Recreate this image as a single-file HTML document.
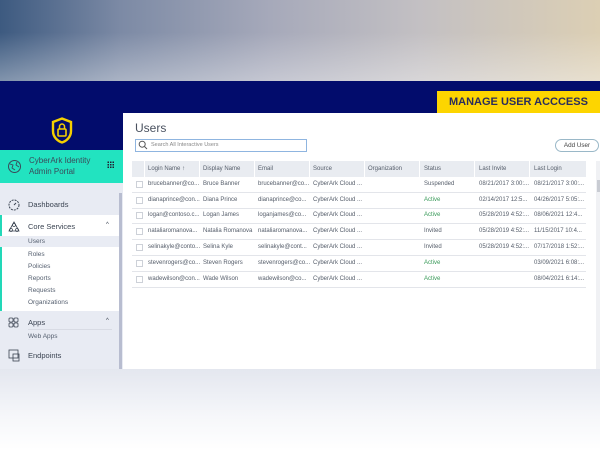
<!DOCTYPE html>
<html><head><meta charset="utf-8"><style>
*{margin:0;padding:0;box-sizing:border-box}
body{width:600px;height:450px;overflow:hidden;position:relative;font-family:"Liberation Sans",sans-serif;background:#fff}
.top{position:absolute;left:0;top:0;width:600px;height:81px;background:linear-gradient(90deg,#3d5a80 0%,#7c8aa5 20%,#a6a9ba 45%,#c3c0c3 70%,#dccfb4 100%)}
.top:after{content:"";position:absolute;inset:0;background:linear-gradient(180deg,rgba(255,255,255,0) 40%,rgba(255,255,255,.35) 100%)}
.navy{position:absolute;left:0;top:81px;width:600px;height:289px;background:#020c6c}
.banner{position:absolute;left:437px;top:91px;width:163px;height:22px;background:#fdd500;color:#2a2d5c;font-weight:bold;font-size:11px;line-height:22px;padding-left:12px;letter-spacing:0}
.bottom{position:absolute;left:0;top:369px;width:600px;height:81px;background:linear-gradient(180deg,#e4e7ef,#f6f7fa 60%,#fff)}
.side{position:absolute;left:0;top:183px;width:123px;height:186px;background:#e8ebf3}
.tealh{position:absolute;left:0;top:150px;width:123px;height:33px;background:#22e3c0;font-size:8px;color:#3a4a5a;line-height:11px}
.sb{position:absolute;left:119px;top:193px;width:3px;height:176px;background:#b8bdd0}
.item{position:absolute;font-size:7.5px;color:#3b4452}
.sub{position:absolute;left:28px;font-size:6.5px;color:#566070}
.main{position:absolute;left:123px;top:113px;width:477px;height:256px;background:#fff}
.t{position:absolute;font-size:6px;color:#555d6a;white-space:nowrap}
.hdr{position:absolute;left:132px;top:161px;width:454px;height:16px;background:#e9ecf1}
.row{position:absolute;left:132px;width:454px;height:1px;background:#e3e5ea}
.cb{position:absolute;left:136px;width:7px;height:7px;border:1px solid #cdd1d8;background:#fff}
</style></head><body>
<div class="top"></div>
<div class="navy"></div>
<div class="banner">MANAGE USER ACCCESS</div>
<svg style="position:absolute;left:51px;top:117px" width="22" height="27" viewBox="0 0 22 27"><path d="M11 1.5 L20 5 V14 C20 20 15.5 24 11 25.5 C6.5 24 2 20 2 14 V5 Z" fill="none" stroke="#f5cf00" stroke-width="2.4"/><rect x="7" y="12" width="8" height="7" rx="1" fill="none" stroke="#f5cf00" stroke-width="1.6"/><path d="M8.5 12 V9.5 a2.5 2.5 0 0 1 5 0 V12" fill="none" stroke="#f5cf00" stroke-width="1.5"/></svg>
<div class="side"></div>
<div class="tealh"><svg style="position:absolute;left:7px;top:9px" width="15" height="15" viewBox="0 0 15 15"><circle cx="7.5" cy="7.5" r="6" fill="none" stroke="#3a4a5a" stroke-width="1"/><path d="M3 5 L6 6 L5 9 L8 11 M10 3 L9 6 L12 8" fill="none" stroke="#3a4a5a" stroke-width=".9"/></svg><div style="position:absolute;left:29px;top:5px">CyberArk Identity<br>Admin Portal</div><div style="position:absolute;left:107px;top:11px;width:7px;height:7px;background-image:radial-gradient(circle,#223 0.8px,transparent 1px);background-size:2.5px 2.5px"></div></div>
<div style="position:absolute;left:0;top:215px;width:119px;height:96px;background:#fff"></div>
<div style="position:absolute;left:0;top:215px;width:2px;height:96px;background:#22d8b8"></div>
<div style="position:absolute;left:0;top:236px;width:119px;height:11px;background:#e9ecf4"></div>
<div style="position:absolute;top:329px;height:1px;background:#d8dbe4;left:28px;width:84px"></div>
<svg style="position:absolute;left:8px;top:199px" width="12" height="12" viewBox="0 0 12 12"><circle cx="6" cy="6" r="5" fill="none" stroke="#3b4452" stroke-dasharray="2 1"/><path d="M6 6 L8 4" stroke="#3b4452"/></svg>
<div class="item" style="left:28px;top:200px">Dashboards</div>
<svg style="position:absolute;left:8px;top:221px" width="12" height="12" viewBox="0 0 12 12"><path d="M6 1 L11 10 H1 Z" fill="none" stroke="#3b4452" stroke-width=".8"/><circle cx="6" cy="4" r="1.5" fill="none" stroke="#3b4452" stroke-width=".7"/><circle cx="3" cy="9" r="1.5" fill="none" stroke="#3b4452" stroke-width=".7"/><circle cx="9" cy="9" r="1.5" fill="none" stroke="#3b4452" stroke-width=".7"/></svg>
<div class="item" style="left:28px;top:222px">Core Services</div>
<div class="item" style="left:106px;top:222px;font-size:6px">^</div>
<div class="sub" style="top:238px">Users</div>
<div class="sub" style="top:251px">Roles</div>
<div class="sub" style="top:263px">Policies</div>
<div class="sub" style="top:275px">Reports</div>
<div class="sub" style="top:287px">Requests</div>
<div class="sub" style="top:299px">Organizations</div>
<svg style="position:absolute;left:8px;top:317px" width="11" height="11" viewBox="0 0 11 11" fill="none" stroke="#3b4452" stroke-width=".8"><rect x="1" y="1" width="4" height="4" rx="1"/><rect x="6" y="1" width="4" height="4" rx="1"/><rect x="1" y="6" width="4" height="4" rx="1"/><rect x="6" y="6" width="4" height="4" rx="1"/></svg>
<div class="item" style="left:28px;top:318px">Apps</div>
<div class="item" style="left:106px;top:318px;font-size:6px">^</div>
<div class="sub" style="top:333px">Web Apps</div>
<svg style="position:absolute;left:8px;top:349px" width="12" height="13" viewBox="0 0 12 13" fill="none" stroke="#3b4452" stroke-width=".8"><rect x="1" y="1" width="9" height="8"/><rect x="5" y="5" width="6" height="7"/></svg>
<div class="item" style="left:28px;top:351px">Endpoints</div>
<div class="sb"></div>
<div class="main"></div>
<div style="position:absolute;left:135px;top:121px;font-size:12px;color:#4a5260">Users</div>
<div style="position:absolute;left:135px;top:139px;width:172px;height:13px;border:1px solid #8fb5e0"></div>
<svg style="position:absolute;left:138px;top:140px" width="10" height="10" viewBox="0 0 10 10" fill="none" stroke="#555" stroke-width="1"><circle cx="4.2" cy="4.2" r="3"/><path d="M6.5 6.5 L9 9"/></svg>
<div class="t" style="left:151px;top:142px;font-size:5.5px;color:#888">Search All Interactive Users</div>
<div style="position:absolute;left:555px;top:139px;width:44px;height:13px;border:1px solid #9ab8c8;border-radius:7px;font-size:6.3px;color:#444;text-align:center;line-height:11px">Add User</div>
<div class="hdr"></div>
<div style="position:absolute;left:596px;top:161px;width:4px;height:208px;background:#f0f1f4"></div>
<div style="position:absolute;left:597px;top:180px;width:3px;height:12px;background:#c9ccd3"></div>
<div class="t" style="left:148px;top:166px">Login Name ↑</div>
<div class="t" style="left:203px;top:166px">Display Name</div>
<div class="t" style="left:258px;top:166px">Email</div>
<div class="t" style="left:313px;top:166px">Source</div>
<div class="t" style="left:368px;top:166px">Organization</div>
<div class="t" style="left:424px;top:166px">Status</div>
<div class="t" style="left:479px;top:166px">Last Invite</div>
<div class="t" style="left:534px;top:166px">Last Login</div>
<div style="position:absolute;left:144px;top:161px;width:1px;height:16px;background:#fff"></div>
<div style="position:absolute;left:199px;top:161px;width:1px;height:16px;background:#fff"></div>
<div style="position:absolute;left:254px;top:161px;width:1px;height:16px;background:#fff"></div>
<div style="position:absolute;left:309px;top:161px;width:1px;height:16px;background:#fff"></div>
<div style="position:absolute;left:364px;top:161px;width:1px;height:16px;background:#fff"></div>
<div style="position:absolute;left:419px;top:161px;width:1px;height:16px;background:#fff"></div>
<div style="position:absolute;left:474px;top:161px;width:1px;height:16px;background:#fff"></div>
<div style="position:absolute;left:529px;top:161px;width:1px;height:16px;background:#fff"></div>

<div class="cb" style="top:181px"></div><div class="t" style="left:148px;top:181px">brucebanner@co...</div><div class="t" style="left:203px;top:181px">Bruce Banner</div><div class="t" style="left:258px;top:181px">brucebanner@co...</div><div class="t" style="left:313px;top:181px">CyberArk Cloud ...</div><div class="t" style="left:424px;top:181px">Suspended</div><div class="t" style="left:479px;top:181px">08/21/2017 3:00:...</div><div class="t" style="left:534px;top:181px">08/21/2017 3:00:...</div><div class="row" style="top:192px"></div>
<div class="cb" style="top:197px"></div><div class="t" style="left:148px;top:197px">dianaprince@con...</div><div class="t" style="left:203px;top:197px">Diana Prince</div><div class="t" style="left:258px;top:197px">dianaprince@co...</div><div class="t" style="left:313px;top:197px">CyberArk Cloud ...</div><div class="t" style="left:424px;top:197px;color:#3a9a5a">Active</div><div class="t" style="left:479px;top:197px">02/14/2017 12:5...</div><div class="t" style="left:534px;top:197px">04/26/2017 5:05:...</div><div class="row" style="top:208px"></div>
<div class="cb" style="top:212px"></div><div class="t" style="left:148px;top:212px">logan@contoso.c...</div><div class="t" style="left:203px;top:212px">Logan James</div><div class="t" style="left:258px;top:212px">loganjames@co...</div><div class="t" style="left:313px;top:212px">CyberArk Cloud ...</div><div class="t" style="left:424px;top:212px;color:#3a9a5a">Active</div><div class="t" style="left:479px;top:212px">05/28/2019 4:52:...</div><div class="t" style="left:534px;top:212px">08/06/2021 12:4...</div><div class="row" style="top:223px"></div>
<div class="cb" style="top:228px"></div><div class="t" style="left:148px;top:228px">nataliaromanova...</div><div class="t" style="left:203px;top:228px">Natalia Romanova</div><div class="t" style="left:258px;top:228px">nataliaromanova...</div><div class="t" style="left:313px;top:228px">CyberArk Cloud ...</div><div class="t" style="left:424px;top:228px">Invited</div><div class="t" style="left:479px;top:228px">05/28/2019 4:52:...</div><div class="t" style="left:534px;top:228px">11/15/2017 10:4...</div><div class="row" style="top:239px"></div>
<div class="cb" style="top:244px"></div><div class="t" style="left:148px;top:244px">selinakyle@conto...</div><div class="t" style="left:203px;top:244px">Selina Kyle</div><div class="t" style="left:258px;top:244px">selinakyle@cont...</div><div class="t" style="left:313px;top:244px">CyberArk Cloud ...</div><div class="t" style="left:424px;top:244px">Invited</div><div class="t" style="left:479px;top:244px">05/28/2019 4:52:...</div><div class="t" style="left:534px;top:244px">07/17/2018 1:52:...</div><div class="row" style="top:255px"></div>
<div class="cb" style="top:260px"></div><div class="t" style="left:148px;top:260px">stevenrogers@co...</div><div class="t" style="left:203px;top:260px">Steven Rogers</div><div class="t" style="left:258px;top:260px">stevenrogers@co...</div><div class="t" style="left:313px;top:260px">CyberArk Cloud ...</div><div class="t" style="left:424px;top:260px;color:#3a9a5a">Active</div><div class="t" style="left:534px;top:260px">03/09/2021 6:08:...</div><div class="row" style="top:271px"></div>
<div class="cb" style="top:276px"></div><div class="t" style="left:148px;top:276px">wadewilson@con...</div><div class="t" style="left:203px;top:276px">Wade Wilson</div><div class="t" style="left:258px;top:276px">wadewilson@co...</div><div class="t" style="left:313px;top:276px">CyberArk Cloud ...</div><div class="t" style="left:424px;top:276px;color:#3a9a5a">Active</div><div class="t" style="left:534px;top:276px">08/04/2021 6:14:...</div><div class="row" style="top:287px"></div>
<div class="bottom"></div>
</body></html>
